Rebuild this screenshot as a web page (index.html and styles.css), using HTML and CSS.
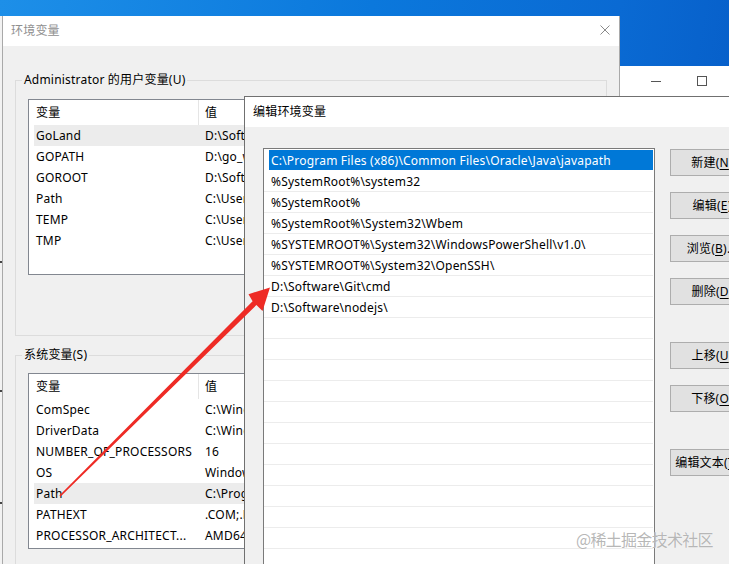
FILE: index.html
```html
<!DOCTYPE html>
<html lang="zh-CN">
<head>
<meta charset="utf-8">
<title>环境变量</title>
<link rel="stylesheet" href="styles.css">
</head>
<body>
<div class="desktop">
  <div class="win back-left"><span class="mark m1"></span><span class="mark m2"></span><span class="mark m3"></span></div>

  <div class="win back-right">
    <div class="caption-btns">
      <span class="cap"><span class="min-line"></span></span>
      <span class="cap"><span class="max-box"></span></span>
    </div>
  </div>

  <section class="win dlg env">
    <header class="titlebar inactive">
      <span class="title">环境变量</span>
      <svg class="close" width="10" height="10" viewBox="0 0 10 10"><path d="M0.5 0.5L9.5 9.5M9.5 0.5L0.5 9.5" stroke="#8a8a8a" stroke-width="1" fill="none"/></svg>
    </header>
    <div class="body">
      <fieldset class="group g-user">
        <legend>Administrator 的用户变量(U)</legend>
        <div class="listview">
          <div class="lv-head"><span class="c1">变量</span><span class="c2">值</span></div>
          <div class="lv-row hl"><span class="c1">GoLand</span><span class="c2">D:\Software\GoLand 2021.1\bin;</span></div>
          <div class="lv-row"><span class="c1">GOPATH</span><span class="c2">D:\go_workspace</span></div>
          <div class="lv-row"><span class="c1">GOROOT</span><span class="c2">D:\Software\Go</span></div>
          <div class="lv-row"><span class="c1">Path</span><span class="c2">C:\Users\Administrator\AppData\Local</span></div>
          <div class="lv-row"><span class="c1">TEMP</span><span class="c2">C:\Users\Administrator\AppData\Local\Temp</span></div>
          <div class="lv-row"><span class="c1">TMP</span><span class="c2">C:\Users\Administrator\AppData\Local\Temp</span></div>
        </div>
      </fieldset>
      <fieldset class="group g-sys">
        <legend>系统变量(S)</legend>
        <div class="listview">
          <div class="lv-head"><span class="c1">变量</span><span class="c2">值</span></div>
          <div class="lv-row"><span class="c1">ComSpec</span><span class="c2">C:\Windows\system32\cmd.exe</span></div>
          <div class="lv-row"><span class="c1">DriverData</span><span class="c2">C:\Windows\System32\Drivers\DriverData</span></div>
          <div class="lv-row"><span class="c1">NUMBER_OF_PROCESSORS</span><span class="c2">16</span></div>
          <div class="lv-row"><span class="c1">OS</span><span class="c2">Windows_NT</span></div>
          <div class="lv-row hl"><span class="c1">Path</span><span class="c2">C:\Program Files (x86)\Common Files</span></div>
          <div class="lv-row"><span class="c1">PATHEXT</span><span class="c2">.COM;.EXE;.BAT;.CMD;.VBS</span></div>
          <div class="lv-row"><span class="c1">PROCESSOR_ARCHITECT...</span><span class="c2">AMD64</span></div>
        </div>
      </fieldset>
    </div>
  </section>

  <section class="win dlg edit">
    <header class="titlebar">
      <span class="title">编辑环境变量</span>
    </header>
    <div class="body edit-body">
      <ul class="pathlist">
        <li class="sel">C:\Program Files (x86)\Common Files\Oracle\Java\javapath</li>
        <li>%SystemRoot%\system32</li>
        <li>%SystemRoot%</li>
        <li>%SystemRoot%\System32\Wbem</li>
        <li>%SYSTEMROOT%\System32\WindowsPowerShell\v1.0\</li>
        <li>%SYSTEMROOT%\System32\OpenSSH\</li>
        <li>D:\Software\Git\cmd</li>
        <li>D:\Software\nodejs\</li>
        <li></li><li></li><li></li><li></li><li></li><li></li><li></li><li></li><li></li><li></li><li></li><li></li><li></li>
      </ul>
      <div class="btns">
        <button class="btn">新建(<u>N</u>)</button>
        <button class="btn">编辑(<u>E</u>)</button>
        <button class="btn">浏览(<u>B</u>)...</button>
        <button class="btn">删除(<u>D</u>)</button>
        <button class="btn sep">上移(<u>U</u>)</button>
        <button class="btn">下移(<u>O</u>)</button>
        <button class="btn sep">编辑文本(<u>T</u>)...</button>
      </div>
    </div>
  </section>

  <svg class="arrow" width="729" height="564" viewBox="0 0 729 564">
    <polygon fill="#ee2b25" points="59.4,495.4 252.6,301.2 248.5,294.2 270,287.5 262.5,311 256.4,305 60.6,496.6"/>
  </svg>

  <div class="watermark">@稀土掘金技术社区</div>
</div>
</body>
</html>
```
FILE: styles.css
```css
html, body {
  margin: 0;
  padding: 0;
}

body {
  font-family: "Noto Sans", "Noto Sans CJK SC", sans-serif;
  font-size: 12px;
  letter-spacing: 0.2px;
  color: #000;
}

.desktop {
  position: relative;
  width: 729px;
  height: 564px;
  overflow: hidden;
  background: linear-gradient(100deg, #1d8fe8 0%, #0b78dc 45%, #0a6ad3 75%, #0559c4 100%);
}

.win {
  position: absolute;
  box-sizing: border-box;
}

/* window peeking at the far left */
.back-left {
  left: -200px;
  top: 16px;
  width: 203px;
  height: 560px;
  background: #f2f2f2;
}
.mark {
  position: absolute;
  right: 1px;
  width: 2px;
  height: 2px;
  background: #444;
}
.m1 { top: 245px; }
.m2 { top: 374px; }
.m3 { top: 486px; }

/* window behind at the top right */
.back-right {
  left: 619px;
  top: 66px;
  width: 200px;
  height: 120px;
  background: #fff;
  border-left: 1px solid #9c9c9c;
}
.caption-btns {
  display: flex;
  padding-left: 13px;
}
.cap {
  width: 46px;
  height: 30px;
  display: flex;
  align-items: center;
  justify-content: center;
}
.min-line {
  width: 10px;
  height: 1px;
  background: #555;
}
.max-box {
  width: 8px;
  height: 8px;
  border: 1px solid #555;
}

/* dialogs */
.dlg {
  background: #f0f0f0;
  display: flex;
  flex-direction: column;
}
.titlebar {
  height: 30px;
  flex: none;
  background: #fff;
  display: flex;
  align-items: center;
  justify-content: space-between;
  padding: 0 9px 0 8px;
}
.titlebar .title {
  line-height: 16px;
}
.titlebar.inactive .title {
  color: #8f8f8f;
}
.close {
  display: block;
  margin-top: -3px;
}

.env {
  left: 2px;
  top: 16px;
  width: 618px;
  height: 620px;
  border: 1px solid #a9a9a9;
  border-top: none;
}
.env .body {
  padding: 26px 12px 0 12px;
}

.group {
  margin: 0;
  border: 1px solid #dcdcdc;
  padding: 11px 12px 0 12px;
}
.group legend {
  padding: 0 2px;
  margin-left: -6px;
  line-height: 16px;
}
.g-user {
  padding-bottom: 60px;
}
.g-sys {
  margin-top: 11px;
  padding-top: 10px;
  height: 260px;
}

.listview {
  background: #fff;
  border: 1px solid #828790;
  width: 222px;
  height: 176px;
  box-sizing: border-box;
  overflow: hidden;
}
.lv-head {
  display: flex;
  height: 25px;
  align-items: center;
  line-height: 16px;
  white-space: nowrap;
}
.lv-head .c1 {
  width: 162px;
  flex: none;
  padding-left: 7px;
  height: 25px;
  display: flex;
  align-items: center;
  border-right: 1px solid #e5e5e5;
}
.lv-head .c2 {
  padding-left: 6px;
}
.lv-row {
  display: flex;
  height: 21px;
  align-items: center;
  margin-left: 5px;
  line-height: 16px;
  white-space: nowrap;
}
.lv-row.hl {
  background: #ececec;
}
.lv-row .c1 {
  width: 162px;
  padding-left: 2px;
  flex: none;
  overflow: hidden;
}
.lv-row .c2 {
  padding-left: 7px;
  flex: 1;
  min-width: 0;
  overflow: hidden;
}

/* edit dialog */
.edit {
  left: 244px;
  top: 96px;
  width: 600px;
  height: 600px;
  border: 1px solid #707070;
}
.edit-body {
  display: flex;
  align-items: flex-start;
  padding: 21px 0 0 18px;
}
.pathlist {
  list-style: none;
  margin: 0;
  padding: 1px 1px 0 0;
  width: 392px;
  box-sizing: border-box;
  background: #fff;
  border: 1px solid #7a7a7a;
  flex: none;
  height: 460px;
  overflow: hidden;
}
.pathlist li {
  height: 20px;
  line-height: 21px;
  border-bottom: 1px solid #ececec;
  padding-left: 7px;
  white-space: nowrap;
}
.pathlist li.sel {
  background: #0078d7;
  color: #fff;
  margin-left: 5px;
  padding-left: 2px;
  border-bottom-color: #fff;
}

.btns {
  display: flex;
  flex-direction: column;
  margin-left: 15px;
  padding-top: 1px;
}
.btn {
  width: 84px;
  height: 27px;
  box-sizing: border-box;
  margin: 0 0 16px 0;
  padding: 0;
  border: 1px solid #adadad;
  background: #e1e1e1;
  font: inherit;
  letter-spacing: inherit;
  color: #000;
  line-height: 16px;
  text-align: center;
  white-space: nowrap;
}
.btn.sep {
  margin-top: 21px;
}
.btn u {
  text-decoration-thickness: 1px;
  text-underline-offset: 2px;
}

/* overlays */
.arrow {
  position: absolute;
  left: 0;
  top: 0;
  pointer-events: none;
}
.watermark {
  position: absolute;
  left: 576px;
  top: 527px;
  font-family: "Noto Sans CJK SC", sans-serif;
  font-size: 16px;
  line-height: 24px;
  color: rgba(170, 170, 170, 0.85);
  letter-spacing: -0.7px;
  text-shadow: 0 0 1px #fff;
  pointer-events: none;
}
```
